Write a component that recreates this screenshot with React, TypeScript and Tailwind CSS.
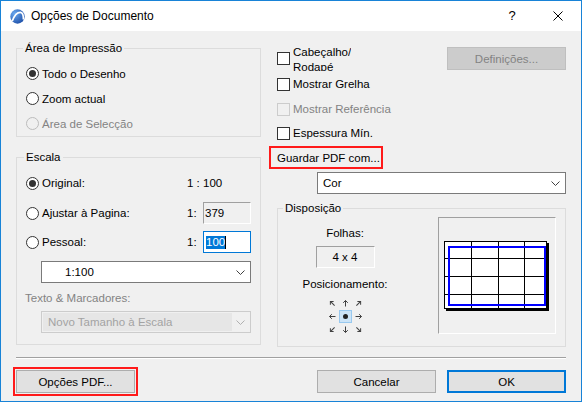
import React from "react";

function Radio({
  checked,
  disabled,
  label,
}: {
  checked?: boolean;
  disabled?: boolean;
  label: string;
}) {
  return (
    <div className="flex items-center">
      <span
        className={`flex h-[13px] w-[13px] shrink-0 items-center justify-center rounded-full border ${
          disabled ? "border-[#bcbcbc]" : "border-[#333333] bg-white"
        }`}
      >
        {checked && <span className="h-[7px] w-[7px] rounded-full bg-[#333333]" />}
      </span>
      <span className={`ml-[3px] ${disabled ? "text-[#838383]" : ""}`}>{label}</span>
    </div>
  );
}

function Check({ disabled, children }: { disabled?: boolean; children: React.ReactNode }) {
  return (
    <div className="flex h-full items-center">
      <span
        className={`h-[13px] w-[13px] shrink-0 border ${
          disabled ? "border-[#cccccc]" : "border-[#333333] bg-white"
        }`}
      />
      <div className={`ml-[3px] ${disabled ? "text-[#838383]" : ""}`}>{children}</div>
    </div>
  );
}

function Chevron({ color = "#404040" }: { color?: string }) {
  return (
    <svg width="9" height="5" viewBox="0 0 9 5" className="shrink-0">
      <polyline points="0.5,0.5 4.5,4.5 8.5,0.5" fill="none" stroke={color} strokeWidth="1" />
    </svg>
  );
}

function Arrow({ deg }: { deg: number }) {
  return (
    <svg width="13" height="13" viewBox="0 0 13 13">
      <g transform={`rotate(${deg} 6.5 6.5)`} stroke="#404040" strokeWidth="1" fill="none">
        <line x1="6.5" y1="9.5" x2="6.5" y2="3.5" />
        <polyline points="4.2,5.8 6.5,3.5 8.8,5.8" />
      </g>
    </svg>
  );
}

function Button({
  children,
  primary,
  disabled,
}: {
  children: React.ReactNode;
  primary?: boolean;
  disabled?: boolean;
}) {
  return (
    <div
      className={`flex h-[23px] w-[119px] items-center justify-center ${
        disabled
          ? "h-[21px] border border-[#bfbfbf] bg-[#cccccc] text-[#838383]"
          : primary
            ? "border-2 border-[#0078d7] bg-[#e1e1e1]"
            : "border border-[#adadad] bg-[#e1e1e1]"
      }`}
    >
      {children}
    </div>
  );
}

const arrows = [315, 0, 45, 270, -1, 90, 225, 180, 135];

export default function App() {
  return (
    <div className="flex h-[402px] w-[582px] flex-col overflow-hidden border border-[#1883d7] bg-[#f0f0f0] font-['Liberation_Sans',Arial,sans-serif] text-[11.5px] leading-[16px] text-black">
      {/* title bar */}
      <div className="flex h-[30px] shrink-0 items-center bg-white">
        <svg width="15" height="15" viewBox="0 0 15 15" className="ml-[9px]">
          <defs>
            <radialGradient id="lg" cx="0.3" cy="0.3" r="0.8">
              <stop offset="0" stopColor="#6aa8ee" />
              <stop offset="1" stopColor="#1d4fa8" />
            </radialGradient>
          </defs>
          <circle cx="7.5" cy="7.5" r="7.2" fill="url(#lg)" />
          <path d="M2.2 12.2 Q5.5 3.2 10.5 3.4 Q13.6 4 13.4 10.5" fill="none" stroke="#fff" strokeWidth="1.7" />
        </svg>
        <span className="ml-[6px] text-[12px]">Opções de Documento</span>
        <div className="ml-auto flex h-full">
          <div className="flex w-[46px] items-center justify-center text-[13px]">?</div>
          <div className="flex w-[46px] items-center justify-center">
            <svg width="10" height="10" viewBox="0 0 10 10">
              <path d="M0.5 0.5 L9.5 9.5 M9.5 0.5 L0.5 9.5" stroke="#000" strokeWidth="1" />
            </svg>
          </div>
        </div>
      </div>

      <div className="flex flex-1 flex-col px-[15px]">
        <div className="flex gap-[8px]">
          {/* left column */}
          <div className="flex w-[245px] shrink-0 flex-col pt-[9px]">
            <fieldset className="min-w-0 border border-[#dcdcdc] p-0">
              <legend className="ml-[6px] px-[2px] leading-[16px]">Área de Impressão</legend>
              <div className="flex flex-col pl-[9px] pt-[5px]">
                <div className="flex h-[25px] items-center">
                  <Radio checked label="Todo o Desenho" />
                </div>
                <div className="flex h-[25px] items-center">
                  <Radio label="Zoom actual" />
                </div>
                <div className="flex h-[25px] items-center">
                  <Radio disabled label="Área de Selecção" />
                </div>
              </div>
            </fieldset>

            <fieldset className="mt-[12px] min-w-0 border border-[#dcdcdc] p-0">
              <legend className="ml-[7px] px-[2px] leading-[16px]">Escala</legend>
              <div className="flex flex-col pb-[11px] pl-[9px] pr-[9px] pt-[3px]">
                <div className="flex h-[30px] items-center">
                  <div className="w-[161px]">
                    <Radio checked label="Original:" />
                  </div>
                  <span>1 : 100</span>
                </div>
                <div className="flex h-[30px] items-center">
                  <div className="w-[161px]">
                    <Radio label="Ajustar à Pagina:" />
                  </div>
                  <span className="w-[16px]">1:</span>
                  <div className="flex h-[22px] w-[48px] items-center border border-b-white border-l-[#a0a0a0] border-r-white border-t-[#a0a0a0] bg-[#f0f0f0] pl-[1px]">
                    379
                  </div>
                </div>
                <div className="flex h-[28px] items-center">
                  <div className="w-[161px]">
                    <Radio label="Pessoal:" />
                  </div>
                  <span className="w-[16px]">1:</span>
                  <div className="flex h-[22px] w-[48px] items-center border border-[#0078d7] bg-white pl-[2px]">
                    <span className="bg-[#0078d7] leading-[13px] text-white">100</span>
                    <span className="h-[13px] w-px bg-black" />
                  </div>
                </div>
                <div className="ml-[15px] mt-[5px] flex h-[22px] items-center border border-[#7a7a7a] bg-white pl-[23px] pr-[5px]">
                  <span>1:100</span>
                  <span className="ml-auto">
                    <Chevron />
                  </span>
                </div>
                <div className="-ml-[1px] mt-[7px] text-[#838383]">Texto &amp; Marcadores:</div>
                <div className="ml-[15px] mt-[5px] flex h-[22px] border border-[#cccccc] p-[1px]">
                  <div className="flex flex-1 items-center bg-[#e6e6e6] pl-[5px] text-[#a3a3a3]">
                    Novo Tamanho à Escala
                  </div>
                  <div className="flex w-[17px] items-center justify-center">
                    <Chevron color="#b0b0b0" />
                  </div>
                </div>
              </div>
            </fieldset>
          </div>

          {/* right column */}
          <div className="flex min-w-0 flex-1 flex-col pt-[14px]">
            <div className="flex justify-between">
              <div className="flex flex-col pl-[8px]">
                <div className="h-[26px]">
                  <Check>
                    <div className="h-[26px] overflow-hidden leading-[15px]">
                      Cabeçalho/
                      <br />
                      Rodapé
                    </div>
                  </Check>
                </div>
                <div className="h-[26px]">
                  <Check>Mostrar Grelha</Check>
                </div>
                <div className="h-[24px]">
                  <Check disabled>Mostrar Referência</Check>
                </div>
                <div className="h-[24px]">
                  <Check>Espessura Mín.</Check>
                </div>
              </div>
              <div className="mt-[2px]">
                <Button disabled>Definições...</Button>
              </div>
            </div>

            <div className="mt-[1px] flex h-[23px] w-[114px] items-center border-2 border-[#ff1a1a] pl-[6px]">
              Guardar PDF com...
            </div>

            <div className="ml-[48px] mt-[3px] flex h-[22px] items-center border border-[#7a7a7a] bg-white pl-[5px] pr-[5px]">
              <span>Cor</span>
              <span className="ml-auto">
                <Chevron />
              </span>
            </div>

            <fieldset className="ml-[8px] mt-[6px] min-w-0 border border-[#dcdcdc] p-0">
              <legend className="ml-[5px] px-[2px] leading-[16px]">Disposição</legend>
              <div className="flex pb-[10px] pt-[1px]">
                <div className="flex w-[134px] flex-col items-center">
                  <div className="mt-[8px]">Folhas:</div>
                  <div className="mt-[5px] flex h-[22px] w-[59px] items-center justify-center border border-b-white border-l-[#a0a0a0] border-r-white border-t-[#a0a0a0]">
                    4 x 4
                  </div>
                  <div className="mt-[8px]">Posicionamento:</div>
                  <div className="mt-[5px] grid w-[39px] grid-cols-3">
                    {arrows.map((d, i) =>
                      d < 0 ? (
                        <div
                          key={i}
                          className="flex h-[13px] w-[13px] items-center justify-center border border-[#99c9ef] bg-[#cce4f7]"
                        >
                          <span className="h-[5px] w-[5px] rounded-full bg-[#222]" />
                        </div>
                      ) : (
                        <Arrow key={i} deg={d} />
                      ),
                    )}
                  </div>
                </div>
                <div className="ml-[26px] h-[117px] w-[118px] border border-b-white border-l-[#a0a0a0] border-r-white border-t-[#a0a0a0]">
                  <svg width="116" height="115" viewBox="0 0 116 115">
                    <rect x="7" y="25" width="103" height="68" fill="#000" />
                    <rect x="5.5" y="23.5" width="102" height="67" fill="#fff" stroke="#000" />
                    <path
                      d="M32.5 23.5 V90.5 M59.5 23.5 V90.5 M85.5 23.5 V90.5 M5.5 40.5 H107.5 M5.5 58.5 H107.5 M5.5 76.5 H107.5"
                      stroke="#000"
                      strokeWidth="1"
                    />
                    <rect x="10" y="29" width="96" height="58" fill="none" stroke="#0000ff" strokeWidth="2" />
                  </svg>
                </div>
              </div>
            </fieldset>
          </div>
        </div>

        <div className="mt-[10px] border-b border-t border-b-white border-t-[#a0a0a0]" />

        <div className="mt-[8px] flex items-center">
          <div className="-ml-[3px] border-2 border-[#ff1a1a] p-[1px]">
            <Button>Opções PDF...</Button>
          </div>
          <div className="ml-auto flex gap-[11px]">
            <Button>Cancelar</Button>
            <Button primary>OK</Button>
          </div>
        </div>
      </div>
    </div>
  );
}
